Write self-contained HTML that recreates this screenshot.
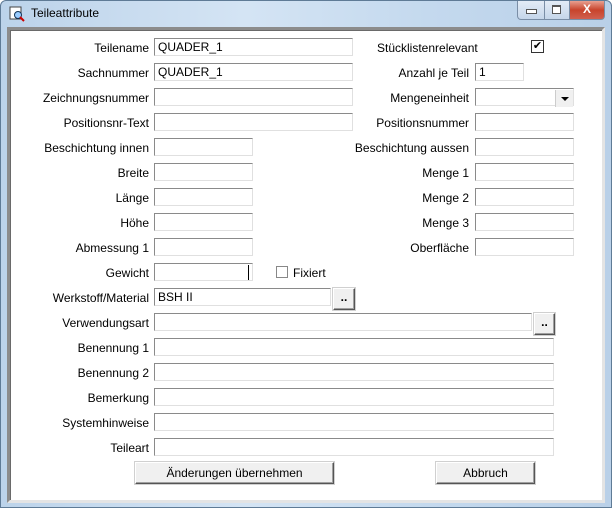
<!DOCTYPE html><html><head><style>
body{margin:0;width:612px;height:508px;overflow:hidden;font-family:"Liberation Sans",sans-serif;font-size:12px;}
.win{position:absolute;left:0;top:0;width:610px;height:506px;border:1px solid #5f7b96;border-radius:6px 6px 0 0;background:linear-gradient(90deg,#bcd3ea,#d4e4f4 40%,#c4d9ee 70%,#b9d0e8);}
.cl{position:absolute;left:7px;top:27px;width:592px;height:470px;background:#fff;border:3px solid;border-color:#8c8c8c #e4e4e4 #e4e4e4 #8c8c8c;box-shadow:inset 1px 1px 0 #6a6a6a;}
.t{position:absolute;left:30px;top:5px;font-size:12px;color:#000}
.lb{position:absolute;text-align:right;width:200px;height:20px;line-height:20px}
.in{position:absolute;height:16px;border:1px solid;border-color:#8a8a8a #e0e0e0 #e0e0e0 #8a8a8a;background:#fff;line-height:16px;padding-left:3px;box-sizing:content-box}
.bt{position:absolute;background:#f0f0f0;border:1px solid;border-color:#fff #555 #555 #fff;box-shadow:inset -1px -1px 0 #a0a0a0,0 0 0 1px #d0d0d0;text-align:center;line-height:18px}
.cap{position:absolute;top:0;height:18px;border:1px solid #7a8ea6;border-top:none;}
</style></head><body>
<div class="win">
<svg style="position:absolute;left:8px;top:5px" width="16" height="16"><rect x="1" y="1" width="11" height="12" fill="#fff" stroke="#444"/><circle cx="9" cy="9" r="3.5" fill="#9cf" stroke="#135"/><line x1="11" y1="11" x2="15" y2="15" stroke="#c00" stroke-width="2"/></svg>
<div class="t">Teileattribute</div>
<div class="cap" style="left:516px;width:26px;border-radius:0 0 0 4px;background:linear-gradient(#e3ecf6,#c5d6ea)"><div style="position:absolute;left:8px;top:8px;width:9px;height:3px;border:1px solid #555;background:#fff"></div></div>
<div class="cap" style="left:543px;width:24px;background:linear-gradient(#e3ecf6,#c5d6ea)"><div style="position:absolute;left:7px;top:4px;width:7px;height:6px;border:1px solid #555;border-top-width:2px;background:#fff"></div></div>
<div class="cap" style="left:568px;width:34px;border-radius:0 0 4px 0;background:linear-gradient(#e8a090,#c8442c 50%,#d06050);color:#fff;font-weight:bold;text-align:center;line-height:17px">X</div>
</div>
<div class="cl"></div>
<div id="f"></div>
<script>
var L=[["Teilename",153,197,"QUADER_1"],["Sachnummer",153,197,"QUADER_1"],["Zeichnungsnummer",153,197],["Positionsnr-Text",153,197],["Beschichtung innen",153,97],["Breite",153,97],["Länge",153,97],["Höhe",153,97],["Abmessung 1",153,97],["Gewicht",153,97],["Werkstoff/Material",153,175,"BSH II"],["Verwendungsart",153,376],["Benennung 1",153,398],["Benennung 2",153,398],["Bemerkung",153,398],["Systemhinweise",153,398],["Teileart",153,398]];
var R=[["Stücklistenrelevant"],["Anzahl je Teil",474,47,"1"],["Mengeneinheit",474,97],["Positionsnummer",474,97],["Beschichtung aussen",474,97],["Menge 1",474,97],["Menge 2",474,97],["Menge 3",474,97],["Oberfläche",474,97]];
var h="";
L.forEach(function(r,i){var y=38+25*i;h+='<div class="lb" style="left:-51px;top:'+y+'px">'+r[0]+'</div><div class="in" style="left:'+(r[1]+1)+'px;top:'+y+'px;width:'+(r[2]-3)+'px">'+(r[3]||"")+'</div>';});
R.forEach(function(r,i){var y=38+25*i;h+='<div class="lb" style="left:'+(i==0?309:269)+'px;top:'+y+'px;'+(i==0?'text-align:left;left:377px':'')+'">'+r[0]+'</div>';if(r[1])h+='<div class="in" style="left:'+(r[1]+1)+'px;top:'+y+'px;width:'+(r[2]-3)+'px">'+(r[3]||"")+'</div>';});
document.getElementById("f").innerHTML=h;
</script>
<div style="position:absolute;left:531px;top:40px;width:11px;height:11px;border:1px solid #333;background:#fff;font-size:11px;line-height:11px;text-align:center">✔</div>
<div style="position:absolute;left:555px;top:90px;width:17px;height:17px;background:#f0f0f0;border-left:1px solid #ccc"><div style="position:absolute;left:5px;top:7px;border:4px solid transparent;border-top:4px solid #000;border-bottom:none"></div></div>
<div style="position:absolute;left:248px;top:265px;width:1px;height:15px;background:#000"></div>
<div style="position:absolute;left:276px;top:266px;width:10px;height:10px;border:1px solid #888;background:#fff"></div>
<div style="position:absolute;left:293px;top:263px;line-height:20px">Fixiert</div>
<div class="bt" style="left:333px;top:288px;width:20px;height:20px;line-height:16px;font-weight:bold">..</div>
<div class="bt" style="left:534px;top:313px;width:19px;height:20px;line-height:16px;font-weight:bold">..</div>
<div class="bt" style="left:135px;top:462px;width:197px;height:20px;line-height:20px">Änderungen übernehmen</div>
<div class="bt" style="left:436px;top:462px;width:97px;height:20px;line-height:20px">Abbruch</div>
</body></html>
